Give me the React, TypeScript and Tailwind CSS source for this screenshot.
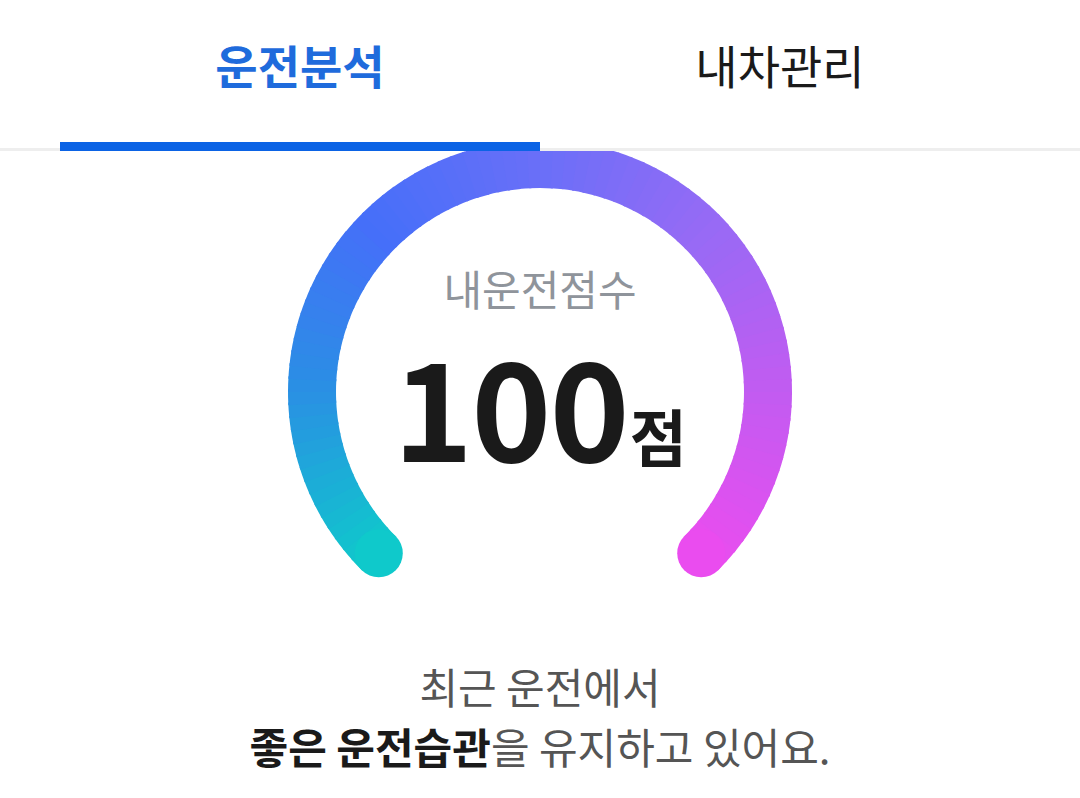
import React from 'react';

const stops: [number, [number, number, number]][] = [
  [0, [15, 201, 203]],
  [0.17, [42, 143, 228]],
  [0.33, [69, 111, 249]],
  [0.5, [106, 111, 248]],
  [0.67, [151, 106, 245]],
  [0.83, [193, 92, 241]],
  [1, [234, 76, 239]],
];

function colorAt(t: number) {
  for (let i = 0; i < stops.length - 1; i++) {
    const [t0, c0] = stops[i];
    const [t1, c1] = stops[i + 1];
    if (t <= t1) {
      const k = (t - t0) / (t1 - t0);
      const c = c0.map((v, j) => Math.round(v + (c1[j] - v) * k));
      return `rgb(${c[0]},${c[1]},${c[2]})`;
    }
  }
  const c = stops[stops.length - 1][1];
  return `rgb(${c[0]},${c[1]},${c[2]})`;
}

// 270° gauge, drawn in page coordinates (viewBox starts under the tab bar)
function Gauge() {
  const cx = 540;
  const cy = 392;
  const r = 228;
  const start = 135;
  const sweep = 270;
  const n = 90;
  const pt = (deg: number) => {
    const a = (deg * Math.PI) / 180;
    return [cx + r * Math.cos(a), cy + r * Math.sin(a)];
  };
  const segs = Array.from({ length: n }, (_, i) => {
    const a0 = start + (sweep * i) / n;
    const a1 = start + (sweep * (i + 1)) / n + (i < n - 1 ? 0.6 : 0);
    const [x0, y0] = pt(a0);
    const [x1, y1] = pt(a1);
    return (
      <path
        key={i}
        d={`M ${x0} ${y0} A ${r} ${r} 0 0 1 ${x1} ${y1}`}
        stroke={colorAt((i + 0.5) / n)}
        strokeWidth={48}
        fill="none"
      />
    );
  });
  const [sx, sy] = pt(start);
  const [ex, ey] = pt(start + sweep);
  return (
    <svg width="1080" height="440" viewBox="0 151 1080 440" className="block">
      {segs}
      <circle cx={sx} cy={sy} r={24} fill={colorAt(0)} />
      <circle cx={ex} cy={ey} r={24} fill={colorAt(1)} />
    </svg>
  );
}

export default function App() {
  return (
    <div className="w-[1080px] h-[798px] overflow-hidden bg-white font-['Noto_Sans_CJK_KR',sans-serif]">
      {/* Tabs */}
      <header className="flex h-[151px] px-[60px] border-b-[3px] border-[#eeeeee]">
        <button className="relative flex-1 flex justify-center pt-[36px]">
          <span className="text-[46px] leading-[56px] font-bold text-[#1f6bdc]">운전분석</span>
          <span className="absolute left-0 right-0 bottom-[-3px] h-[9px] bg-[#0b63e5]" />
        </button>
        <button className="flex-1 flex justify-center pt-[36px]">
          <span className="text-[46px] leading-[56px] text-[#1a1a1a]">내차관리</span>
        </button>
      </header>

      {/* Score gauge */}
      <section className="relative">
        <Gauge />
        <div className="absolute inset-x-0 top-[112px] flex flex-col items-center">
          <p className="text-[42px] leading-[50px] text-[#8f949b]">내운전점수</p>
          <p className="mt-[30px] flex items-baseline text-[#1a1a1a] font-bold">
            <span className="text-[136px] leading-[120px] tracking-[-2px]">100</span>
            <span className="ml-[2px] text-[62px] leading-none">점</span>
          </p>
        </div>
      </section>

      {/* Message */}
      <div className="mt-[65px] text-center text-[42px] leading-[60px] text-[#555555]">
        <p>최근 운전에서</p>
        <p>
          <b className="font-bold text-[#1a1a1a]">좋은 운전습관</b>을 유지하고 있어요.
        </p>
      </div>
    </div>
  );
}
